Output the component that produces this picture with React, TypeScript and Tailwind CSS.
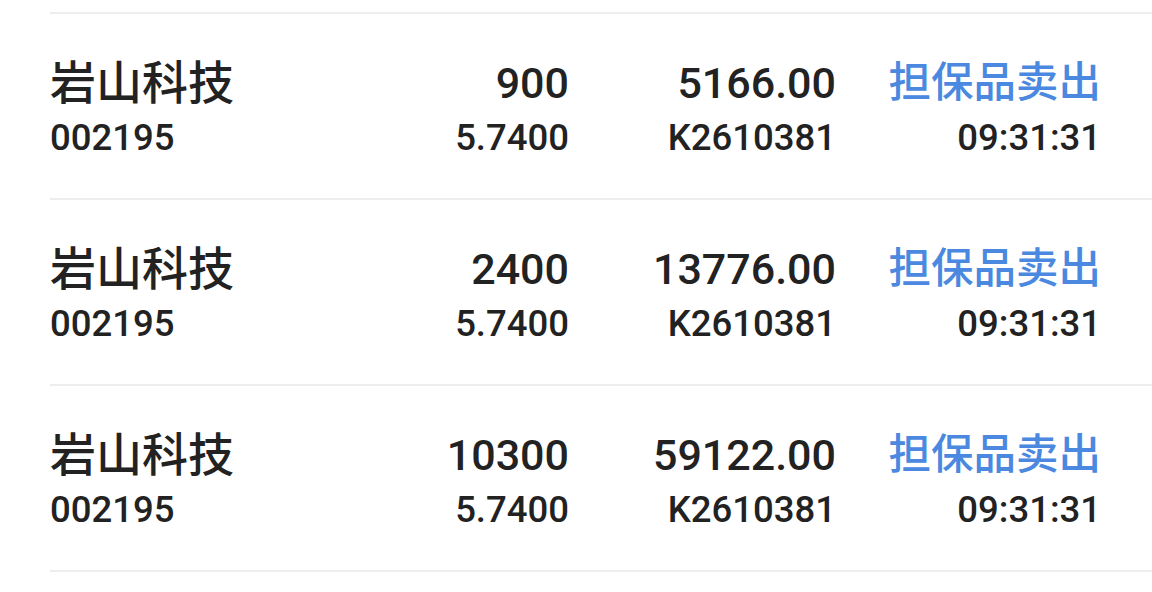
const ROWS = [
  { name: "岩山科技", code: "002195", qty: "900", price: "5.7400", amount: "5166.00", account: "K2610381", action: "担保品卖出", time: "09:31:31" },
  { name: "岩山科技", code: "002195", qty: "2400", price: "5.7400", amount: "13776.00", account: "K2610381", action: "担保品卖出", time: "09:31:31" },
  { name: "岩山科技", code: "002195", qty: "10300", price: "5.7400", amount: "59122.00", account: "K2610381", action: "担保品卖出", time: "09:31:31" },
];

const font = { fontFamily: "Roboto, 'Noto Sans CJK SC', sans-serif" };

export default function App() {
  return (
    <div className="w-[1152px] h-[592px] bg-white overflow-hidden pt-3 text-[#222222] font-medium" style={font}>
      <div className="ml-[50px] border-t-2 border-[#eeeeee]">
        {ROWS.map((r, i) => (
          <div key={i} className="flex border-b-2 border-[#eeeeee] pr-[51px] pt-[39px] pb-[38px]">
            {/* name + code */}
            <div className="w-[251px]">
              <div className="text-[46px] leading-[60px]">{r.name}</div>
              <div className="mt-[3px] text-[36.5px] leading-[44px]">{r.code}</div>
            </div>
            {/* qty + price */}
            <div className="w-[268px] text-right">
              <div className="text-[43px] leading-[60px]">{r.qty}</div>
              <div className="mt-[3px] text-[36.5px] leading-[44px]">{r.price}</div>
            </div>
            {/* amount + account */}
            <div className="w-[267px] text-right">
              <div className="text-[43px] leading-[60px]">{r.amount}</div>
              <div className="mt-[3px] text-[36.5px] leading-[44px]">{r.account}</div>
            </div>
            {/* action + time */}
            <div className="flex-1 text-right">
              <div className="text-[42.5px] leading-[60px] text-[#4b88e0]">{r.action}</div>
              <div className="mt-[3px] text-[36.5px] leading-[44px]">{r.time}</div>
            </div>
          </div>
        ))}
      </div>
    </div>
  );
}
